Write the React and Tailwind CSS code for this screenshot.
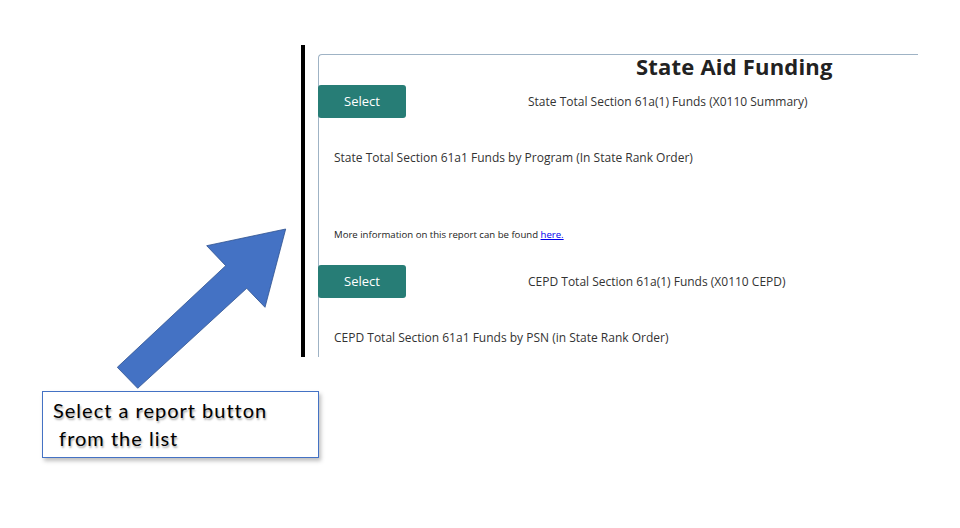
import React from "react";

const reports = [
  {
    title: "State Total Section 61a(1) Funds (X0110 Summary)",
    detail: "State Total Section 61a1 Funds by Program (In State Rank Order)",
    more: true,
  },
  {
    title: "CEPD Total Section 61a(1) Funds (X0110 CEPD)",
    detail: "CEPD Total Section 61a1 Funds by PSN (in State Rank Order)",
    more: false,
  },
];

const ReportRow = ({ report }) => (
  <div>
    <div className="flex h-[33px] items-center">
      <button className="-ml-px flex h-[33px] w-[88px] items-center justify-center rounded-[3px] bg-[#277d76] text-[13px] text-white">
        Select
      </button>
      <span className="ml-[122px] text-[12px] leading-[16px] text-[#333]">
        {report.title}
      </span>
    </div>
    <p className="mt-[32px] pl-[15px] text-[12px] leading-[16px] text-[#333]">
      {report.detail}
    </p>
    {report.more && (
      <p className="mt-[63px] pl-[15px] text-[9.6px] leading-[12px] text-[#222]">
        More information on this report can be found{" "}
        <a href="#" className="text-[#0000ee] underline">
          here.
        </a>
      </p>
    )}
  </div>
);

// callout arrow pointing at the report list
const Arrow = () => (
  <svg
    className="absolute left-[110px] top-[222px]"
    width="185"
    height="172"
    viewBox="0 0 185 172"
  >
    <polygon
      points="175.7,7 96.7,23.7 115.7,43.7 7.3,145.3 27.7,166.3 136.7,66.3 155,85.3"
      fill="#4472c4"
      stroke="#2f528f"
      strokeWidth="0.8"
      strokeLinejoin="miter"
    />
  </svg>
);

export default function App() {
  return (
    <div
      className="relative h-[528px] w-[960px] overflow-hidden bg-white"
      style={{ fontFamily: '"Open Sans", sans-serif' }}
    >
      <div className="flex pl-[301px] pt-[45px]">
        <div className="h-[312px] w-[4px] bg-black" />
        <div className="ml-[13px] mt-[9px] h-[303px] w-[600px] rounded-tl-[4px] border-l border-t border-[#9fb3c5]">
          <h1 className="-mt-[4px] h-[34px] pl-[317px] text-[22px] font-bold leading-[30px] tracking-[0.2px] text-[#222]">
            State Aid Funding
          </h1>
          <ReportRow report={reports[0]} />
          <div className="mt-[24px]">
            <ReportRow report={reports[1]} />
          </div>
        </div>
      </div>

      <Arrow />

      <div className="absolute left-[42px] top-[391px] h-[67px] w-[277px] border border-[#4472c4] bg-white shadow-[2px_3px_4px_rgba(0,0,0,0.25)]">
        <p
          className="pl-[10px] pt-[4px] text-[20px] leading-[28px] tracking-[1px] text-black"
          style={{
            fontFamily: 'Lato, "Liberation Sans", sans-serif',
            textShadow: "1px 2px 2px rgba(0,0,0,0.35)",
          }}
        >
          Select a report button
          <br />
          &nbsp;from the list
        </p>
      </div>
    </div>
  );
}
